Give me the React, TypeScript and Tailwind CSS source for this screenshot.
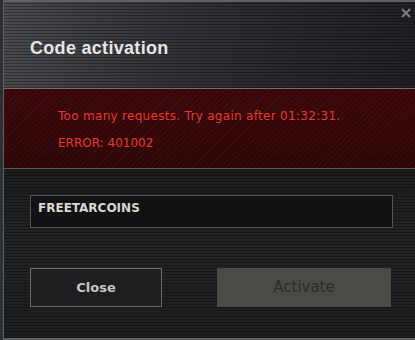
const scan =
  "bg-[repeating-linear-gradient(0deg,rgba(0,0,0,0.34)_0px,rgba(0,0,0,0.34)_1px,transparent_1px,transparent_3px)]";

export default function App() {
  return (
    <div className="w-[415px] h-[340px] bg-[#1b1d1f] flex overflow-hidden" style={{ fontFamily: '"Liberation Sans", Arial, sans-serif' }}>
      <div className="w-[3px] bg-[#2c3032]" />
      <div className="flex-1 relative flex flex-col border-t-2 border-l border-b-2 border-[#5e6062] bg-[#1e2022]">
        {/* header */}
        <div className="relative h-[87px] bg-[linear-gradient(100deg,#4a4b4e_0%,#303134_45%,#1f2023_100%)] border-b border-[#6f7072]">
          <div className={`absolute inset-0 ${scan}`} />
          <div className="relative pl-[26px] pt-[33px] text-[18px] font-bold text-[#e6e6e2] tracking-[0.3px]">
            Code activation
          </div>
          <div className="absolute right-[4px] top-[6px] text-[#7e7f80]">
            <svg width="10" height="10" viewBox="0 0 10 10">
              <path d="M1 1L9 9M9 1L1 9" stroke="currentColor" strokeWidth="2" />
            </svg>
          </div>
        </div>

        {/* error */}
        <div className="relative h-[80px] bg-[linear-gradient(180deg,#3a0709_0%,#2e0608_100%)] border-b border-[#5a5c5e]">
          <div className="absolute inset-0 bg-[repeating-linear-gradient(135deg,rgba(255,255,255,0.03)_0px,rgba(255,255,255,0.03)_1px,transparent_1px,transparent_4px)]" />
          <div className="relative pl-[54px] pt-[20px] text-[12px] text-[#e8392c] leading-[14px] flex flex-col gap-[13px] font-['DejaVu_Sans',sans-serif]">
            <span className="tracking-[0.3px]">Too many requests. Try again after 01:32:31.</span>
            <span>ERROR: 401002</span>
          </div>
        </div>

        {/* body */}
        <div className="relative flex-1 bg-[linear-gradient(180deg,#1b1d1f_0%,#222426_45%,#1c1e20_100%)]">
          <div className={`absolute inset-0 ${scan}`} />
          <div className="relative pt-[26px] pl-[26px] pr-[22px]">
            <div className="h-[33px] border border-[#5b5249] bg-[#111213] pl-[7px] pt-[3px] text-[12px] font-bold text-[#d8d8d0] font-['DejaVu_Sans',sans-serif]">
              FREETARCOINS
            </div>
            <div className="flex justify-between mt-[40px] pr-[2px]">
              <div className="w-[132px] h-[39px] border border-[#6c6c6c] bg-[#1c1e20] flex items-center justify-center text-[13px] font-bold text-[#c6c6c4] font-['DejaVu_Sans',sans-serif]">
                Close
              </div>
              <div className="w-[174px] h-[39px] bg-[#4a4b45] flex items-center justify-center text-[15px] text-[#2a2b2a] font-['DejaVu_Sans',sans-serif]">
                Activate
              </div>
            </div>
          </div>
        </div>
      </div>
    </div>
  );
}
